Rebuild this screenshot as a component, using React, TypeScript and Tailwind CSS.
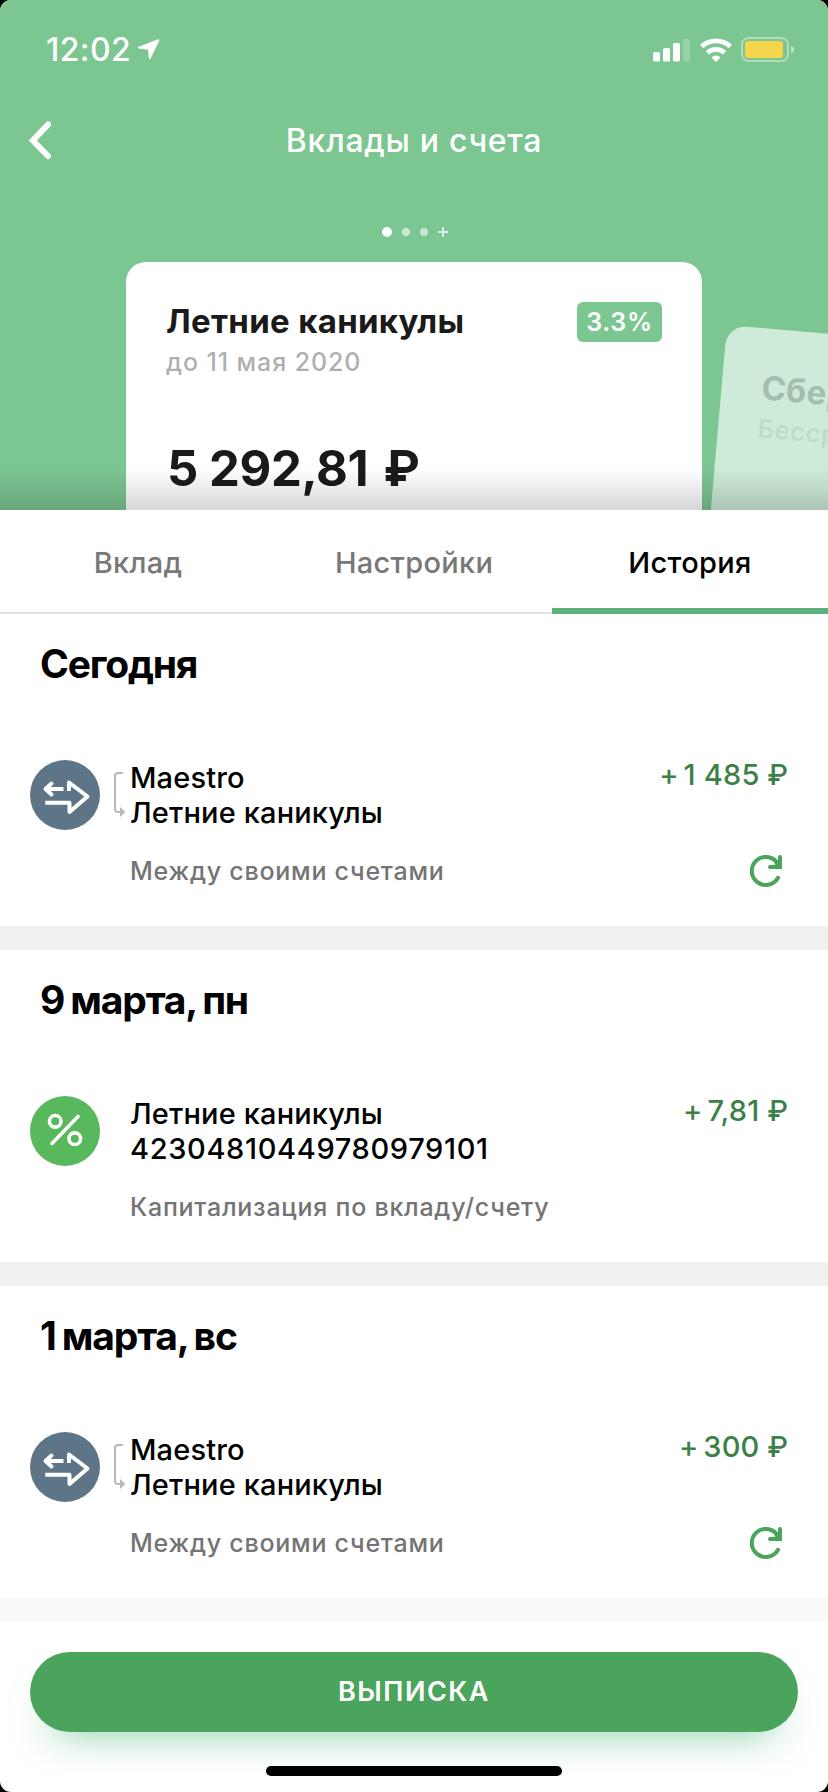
import React, { useState } from 'react';

type Operation = {
  date: string;
  kind: 'transfer' | 'percent';
  title: string;
  account: string;
  note: string;
  amount: string;
};

const operations: Operation[] = [
  {
    date: 'Сегодня',
    kind: 'transfer',
    title: 'Maestro',
    account: 'Летние каникулы',
    note: 'Между своими счетами',
    amount: '1 485',
  },
  {
    date: '9 марта, пн',
    kind: 'percent',
    title: 'Летние каникулы',
    account: '42304810449780979101',
    note: 'Капитализация по вкладу/счету',
    amount: '7,81',
  },
  {
    date: '1 марта, вс',
    kind: 'transfer',
    title: 'Maestro',
    account: 'Летние каникулы',
    note: 'Между своими счетами',
    amount: '300',
  },
];

const tabs = ['Вклад', 'Настройки', 'История'];

const StatusBar: React.FC = () => (
  <div className="flex h-[99px] shrink-0 items-center pl-[46px] pr-[34px] text-white">
    <span className="text-[32px] font-medium leading-none tracking-[0.4px]">12:02</span>
    <svg className="ml-[7px]" width="22" height="21" viewBox="0 0 22 21" fill="currentColor" stroke="currentColor" strokeWidth="2" strokeLinejoin="round">
      <path d="M20.3 1.2 11.8 19 11 9.9 1 8.6Z" />
    </svg>
    <div className="ml-auto flex items-center">
      <svg width="37" height="24" viewBox="0 0 37 24" fill="currentColor">
        <rect x="0" y="14" width="7" height="9.5" rx="1.6" />
        <rect x="10" y="10" width="7" height="13.5" rx="1.6" />
        <rect x="20" y="5" width="7" height="18.5" rx="1.6" />
        <rect x="30" y="0.5" width="7" height="23" rx="1.6" opacity="0.2" />
      </svg>
      <svg className="ml-[10px]" width="32" height="24" viewBox="0 0 32 24" fill="none" stroke="currentColor">
        <path d="M1.6 8.6a21.2 21.2 0 0 1 28.8 0" strokeWidth="4.8" />
        <path d="M7.3 14.8a12.7 12.7 0 0 1 17.4 0" strokeWidth="4.6" />
        <path d="M16 24 11.5 19.4a6.4 6.4 0 0 1 9 0Z" fill="currentColor" stroke="none" />
      </svg>
      <svg className="ml-[9px]" width="53" height="25" viewBox="0 0 53 25">
        <rect x="1" y="1" width="46" height="23" rx="6.5" fill="none" stroke="#fff" strokeOpacity="0.4" strokeWidth="2" />
        <rect x="4" y="4" width="38" height="17" rx="3" fill="#f5d54b" />
        <path d="M50 8.5c2 .7 3 2.2 3 4s-1 3.3-3 4Z" fill="#fff" fillOpacity="0.5" />
      </svg>
    </div>
  </div>
);

const TransferIcon: React.FC = () => (
  <svg width="70" height="70" viewBox="0 0 70 70" fill="none" className="shrink-0">
    <circle cx="35" cy="35" r="35" fill="#5d7586" />
    <g stroke="#fff" strokeWidth="4" strokeLinejoin="round">
      <path d="M33.5 29H16" />
      <path d="M21.5 23.5 15.5 29l6 5.5" strokeLinecap="round" />
      <path d="M39 31v-8.5L57.5 36.5 39.5 52v-9.3H15.3" />
    </g>
  </svg>
);

const PercentIcon: React.FC = () => (
  <svg width="70" height="70" viewBox="0 0 70 70" fill="none" className="shrink-0">
    <circle cx="35" cy="35" r="35" fill="#57b95c" />
    <g stroke="#fff" strokeWidth="3.6" strokeLinecap="round">
      <circle cx="25.2" cy="25.3" r="5.8" />
      <circle cx="44.8" cy="42.7" r="5.8" />
      <path d="M22 47.5 48 20.5" />
    </g>
  </svg>
);

// Bracket that links the source account with the target one
const LinkArrow: React.FC = () => (
  <svg className="ml-[14px] mt-[12px] shrink-0" width="16" height="46" viewBox="0 0 16 46" fill="none">
    <path d="M9 1H4Q1 1 1 4v33q0 3 3 3h3" stroke="#b8b8b8" strokeWidth="2" />
    <path d="M6 35v10l5.5-5Z" fill="#b8b8b8" />
  </svg>
);

const RepeatIcon: React.FC = () => (
  <svg width="32" height="32" viewBox="0 0 32 32" fill="none" stroke="#4ba45c" strokeWidth="4" strokeLinecap="round">
    <path d="M28 22.8A14 14 0 1 1 28.2 9.5" />
    <path d="M30 2v10H20" strokeLinejoin="miter" />
    <path d="M26.5 8 29 11" />
  </svg>
);

type CardProps = {
  title: string;
  term: string;
  amount?: string;
  rate?: string;
  className: string;
};

const DepositCard: React.FC<CardProps> = ({ title, term, amount, rate, className }) => (
  <div className={`h-[340px] w-[576px] shrink-0 rounded-[20px] px-[40px] pt-[40px] ${className}`}>
    <div className="flex h-[38px] items-start justify-between">
      <h2 className="whitespace-nowrap text-[33px] font-bold leading-[38px] tracking-[0.3px]">{title}</h2>
      {rate && (
        <span className="flex h-[40px] w-[85px] shrink-0 items-center justify-center rounded-[6px] bg-[#7cc692] pt-[2px] text-[25px] font-semibold tracking-[0.7px] text-white">
          {rate}
        </span>
      )}
    </div>
    <p className="whitespace-nowrap text-[25px] font-medium leading-[45px] tracking-[0.9px] opacity-35">{term}</p>
    {amount && (
      <p className="mt-[54px] whitespace-nowrap pl-px text-[49px] font-bold leading-[60px] tracking-[-0.4px]">
        {amount} <span className="ml-[4px]">₽</span>
      </p>
    )}
  </div>
);

const OperationSection: React.FC<{ operation: Operation }> = ({ operation }) => (
  <section className="h-[312px] shrink-0 pt-[30px]">
    <h3 className="pl-[40px] text-[39px] font-bold leading-[40px] tracking-[-1.2px] text-black [word-spacing:-1.8px]">
      {operation.date}
    </h3>
    <div className="mt-[76px] flex items-start pl-[30px] pr-[40px]">
      {operation.kind === 'transfer' ? <TransferIcon /> : <PercentIcon />}
      <div className="flex w-[30px] shrink-0">{operation.kind === 'transfer' && <LinkArrow />}</div>
      <div className="whitespace-nowrap text-[29px] font-medium leading-[35px] tracking-[0.15px] text-black">
        <p>{operation.title}</p>
        <p className={operation.kind === 'percent' ? 'tracking-[0.65px]' : ''}>{operation.account}</p>
        <p className="mt-[24px] text-[25px] font-medium tracking-[0.75px] text-[#747474]">{operation.note}</p>
      </div>
      <div className="-mt-[3px] ml-auto flex flex-col items-end">
        <p className="whitespace-nowrap text-[29px] font-medium leading-[35px] text-[#3c8049]">
          +<span className="ml-[5px] tracking-[0.2px]">{operation.amount}</span> <span>₽</span>
        </p>
        {operation.kind === 'transfer' && (
          <button className="mr-[6px] mt-[63px]" aria-label="Повторить">
            <RepeatIcon />
          </button>
        )}
      </div>
    </div>
  </section>
);

const App: React.FC = () => {
  const [activeTab, setActiveTab] = useState('История');

  return (
    <div className="h-[1792px] w-[828px] bg-black font-['Inter',sans-serif]">
      <div className="flex h-full flex-col overflow-hidden rounded-[11px] bg-white">
        <header className="relative flex h-[510px] shrink-0 flex-col overflow-hidden bg-[#7cc692]">
          <StatusBar />
          <div className="grid h-[82px] shrink-0 grid-cols-[1fr_auto_1fr] items-center">
            <svg className="ml-[28px]" width="24" height="40" viewBox="0 0 24 40" fill="none" stroke="#fff" strokeWidth="6" strokeLinecap="round" strokeLinejoin="miter">
              <path d="M20 4.5 4.8 20.5 20 36" />
            </svg>
            <h1 className="pt-[2px] text-[32px] font-medium leading-none tracking-[0.7px] text-white">Вклады и счета</h1>
          </div>
          <div className="flex h-[81px] shrink-0 items-center justify-center gap-[10px] pl-[2px] pt-[21px]">
            <i className="h-[10px] w-[10px] rounded-full bg-white" />
            <i className="h-2 w-2 rounded-full bg-white/60" />
            <i className="h-2 w-2 rounded-full bg-white/60" />
            <svg width="10" height="10" viewBox="0 0 10 10" stroke="#fff" strokeOpacity="0.7" strokeWidth="2">
              <path d="M5 0v10M0 5h10" />
            </svg>
          </div>
          <div className="flex items-start pl-[126px]">
            <DepositCard
              title="Летние каникулы"
              term="до 11 мая 2020"
              amount="5 292,81"
              rate="3.3%"
              className="bg-white text-[#1a1a1a]"
            />
            <DepositCard
              title="Сберегательный"
              term="Бессрочный"
              className="ml-[24.7px] mt-[63.4px] origin-top-left rotate-[5deg] bg-[#cdebd8] text-[#a2bfae]"
            />
          </div>
          <div className="absolute inset-x-0 bottom-0 h-[42px] bg-linear-to-b from-black/0 to-black/16" />
        </header>

        <nav className="grid h-[104px] shrink-0 grid-cols-3 bg-white">
          {tabs.map((tab) => (
            <button
              key={tab}
              onClick={() => setActiveTab(tab)}
              className={`relative border-b-2 border-[#e2e2e2] pt-[3px] text-[29px] font-medium tracking-[0.3px] ${activeTab === tab ? 'text-black' : 'text-[#787878]'}`}
            >
              {tab}
              {activeTab === tab && <span className="absolute inset-x-0 -bottom-[2px] h-[6px] bg-[#5cb07a]" />}
            </button>
          ))}
        </nav>

        <main className="flex shrink-0 flex-col">
          {operations.map((operation, i) => (
            <React.Fragment key={operation.date}>
              <OperationSection operation={operation} />
              <div className={`h-[24px] shrink-0 ${i === operations.length - 1 ? 'bg-[#f9f9f9]' : 'bg-[#f0f0f0]'}`} />
            </React.Fragment>
          ))}
        </main>

        <footer className="flex flex-col items-center px-[30px] pt-[30px]">
          <button className="h-[80px] w-full rounded-full bg-[#4ba45b] text-[27px] font-semibold tracking-[1.5px] text-white shadow-[0_22px_40px_-22px_rgba(50,170,100,0.65)]">
            ВЫПИСКА
          </button>
          <div className="relative mt-[34px] h-[10px] w-[296px] rounded-full bg-black" />
        </footer>
      </div>
    </div>
  );
};

export default App;
